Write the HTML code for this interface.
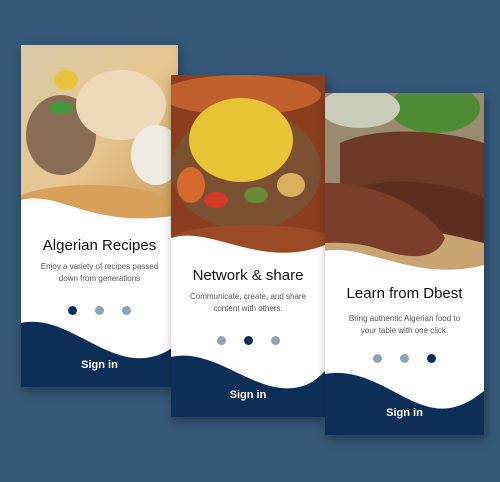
<!DOCTYPE html>
<html><head><style>
body{margin:0;width:500px;height:482px;background:#365878;overflow:hidden;position:relative;font-family:"Liberation Sans",Arial,sans-serif}
.card{position:absolute;width:157px;height:342px;box-shadow:2px 4px 10px rgba(0,0,0,.35)}
.card svg{position:absolute;left:0;top:0}
.t{position:absolute;left:0;width:100%;text-align:center}
.h{font-size:15px;color:#111}
.p{font-size:8px;color:#555;line-height:11.5px}
.s{font-size:11px;font-weight:bold;color:#fff}
.dots{position:absolute;left:0;width:100%;display:flex;justify-content:center;gap:18px}
.dots i{width:9px;height:9px;border-radius:50%;background:#8ea3b8;display:block}
.dots i.a{background:#0d2f57}
</style></head><body>

<div class="card" style="left:21px;top:45px">
<svg width="157" height="342">
<defs><linearGradient id="g1" x1="0" y1="0" x2="1" y2="1"><stop offset="0" stop-color="#d9c9a8"/><stop offset=".5" stop-color="#e7c690"/><stop offset="1" stop-color="#c99a5a"/></linearGradient></defs>
<rect width="157" height="185" fill="url(#g1)"/>
<ellipse cx="40" cy="90" rx="35" ry="40" fill="#8b6d55"/>
<ellipse cx="45" cy="35" rx="12" ry="10" fill="#e8c23a"/>
<ellipse cx="40" cy="63" rx="12" ry="6" fill="#3f9a3f"/>
<ellipse cx="100" cy="60" rx="45" ry="35" fill="#efd9b8"/>
<ellipse cx="135" cy="110" rx="25" ry="30" fill="#f0ebe2"/>
<ellipse cx="70" cy="160" rx="80" ry="20" fill="#d8a05a"/>
<path d="M0,155 C40,145 70,185 157,170 L157,342 L0,342Z" fill="#fff"/>
<path d="M0,278 C45,268 85,322 130,312 C145,309 152,302 157,298 L157,342 L0,342Z" fill="#0d2f57"/>
</svg>
<div class="t h" style="top:192px">Algerian Recipes</div>
<div class="t p" style="top:216px">Enjoy a variety of recipes passed<br>down from generations</div>
<div class="dots" style="top:261px"><i class="a"></i><i></i><i></i></div>
<div class="t s" style="top:314px">Sign in</div>
</div>

<div class="card" style="left:171px;top:75px;width:154px">
<svg width="154" height="342">
<rect width="154" height="190" fill="#8a3e1e"/>
<ellipse cx="70" cy="20" rx="80" ry="20" fill="#c0602e"/>
<ellipse cx="75" cy="95" rx="75" ry="60" fill="#7a5030"/>
<ellipse cx="70" cy="65" rx="52" ry="42" fill="#e8c434"/>
<ellipse cx="20" cy="110" rx="14" ry="18" fill="#d66a2e"/>
<ellipse cx="45" cy="125" rx="12" ry="8" fill="#d23a2a"/>
<ellipse cx="85" cy="120" rx="12" ry="8" fill="#6a8a3a"/>
<ellipse cx="120" cy="110" rx="14" ry="12" fill="#d8b060"/>
<ellipse cx="80" cy="165" rx="80" ry="15" fill="#9a4a24"/>
<path d="M0,163 C40,150 90,195 154,170 L154,342 L0,342Z" fill="#fff"/>
<path d="M0,282 C45,272 85,322 128,312 C142,309 150,300 154,296 L154,342 L0,342Z" fill="#0d2f57"/>
</svg>
<div class="t h" style="top:192px">Network &amp; share</div>
<div class="t p" style="top:216px">Communicate, create, and share<br>content with others.</div>
<div class="dots" style="top:261px"><i></i><i class="a"></i><i></i></div>
<div class="t s" style="top:314px">Sign in</div>
</div>

<div class="card" style="left:325px;top:93px;width:159px">
<svg width="159" height="342">
<rect width="159" height="190" fill="#9a8a70"/>
<ellipse cx="110" cy="15" rx="45" ry="25" fill="#4f8a34"/>
<ellipse cx="35" cy="15" rx="40" ry="20" fill="#c8ccb8"/>
<ellipse cx="80" cy="160" rx="90" ry="30" fill="#c8a472"/>
<path d="M15,50 C60,30 130,40 159,50 L159,110 C120,95 60,90 15,95Z" fill="#6e3a28"/>
<path d="M30,95 C80,80 140,95 159,105 L159,150 C120,140 70,130 30,130Z" fill="#5e2f20"/>
<path d="M0,90 C40,88 100,110 120,145 C110,170 80,165 50,155 C30,148 0,150 0,150Z" fill="#7a3e2a"/>
<path d="M0,158 C40,150 90,190 159,172 L159,342 L0,342Z" fill="#fff"/>
<path d="M0,281 C50,272 85,322 125,315 C142,312 152,303 159,298 L159,342 L0,342Z" fill="#0d2f57"/>
</svg>
<div class="t h" style="top:192px">Learn from Dbest</div>
<div class="t p" style="top:220px">Bring authentic Algerian food to<br>your table with one click.</div>
<div class="dots" style="top:261px"><i></i><i></i><i class="a"></i></div>
<div class="t s" style="top:314px">Sign in</div>
</div>
</body></html>
